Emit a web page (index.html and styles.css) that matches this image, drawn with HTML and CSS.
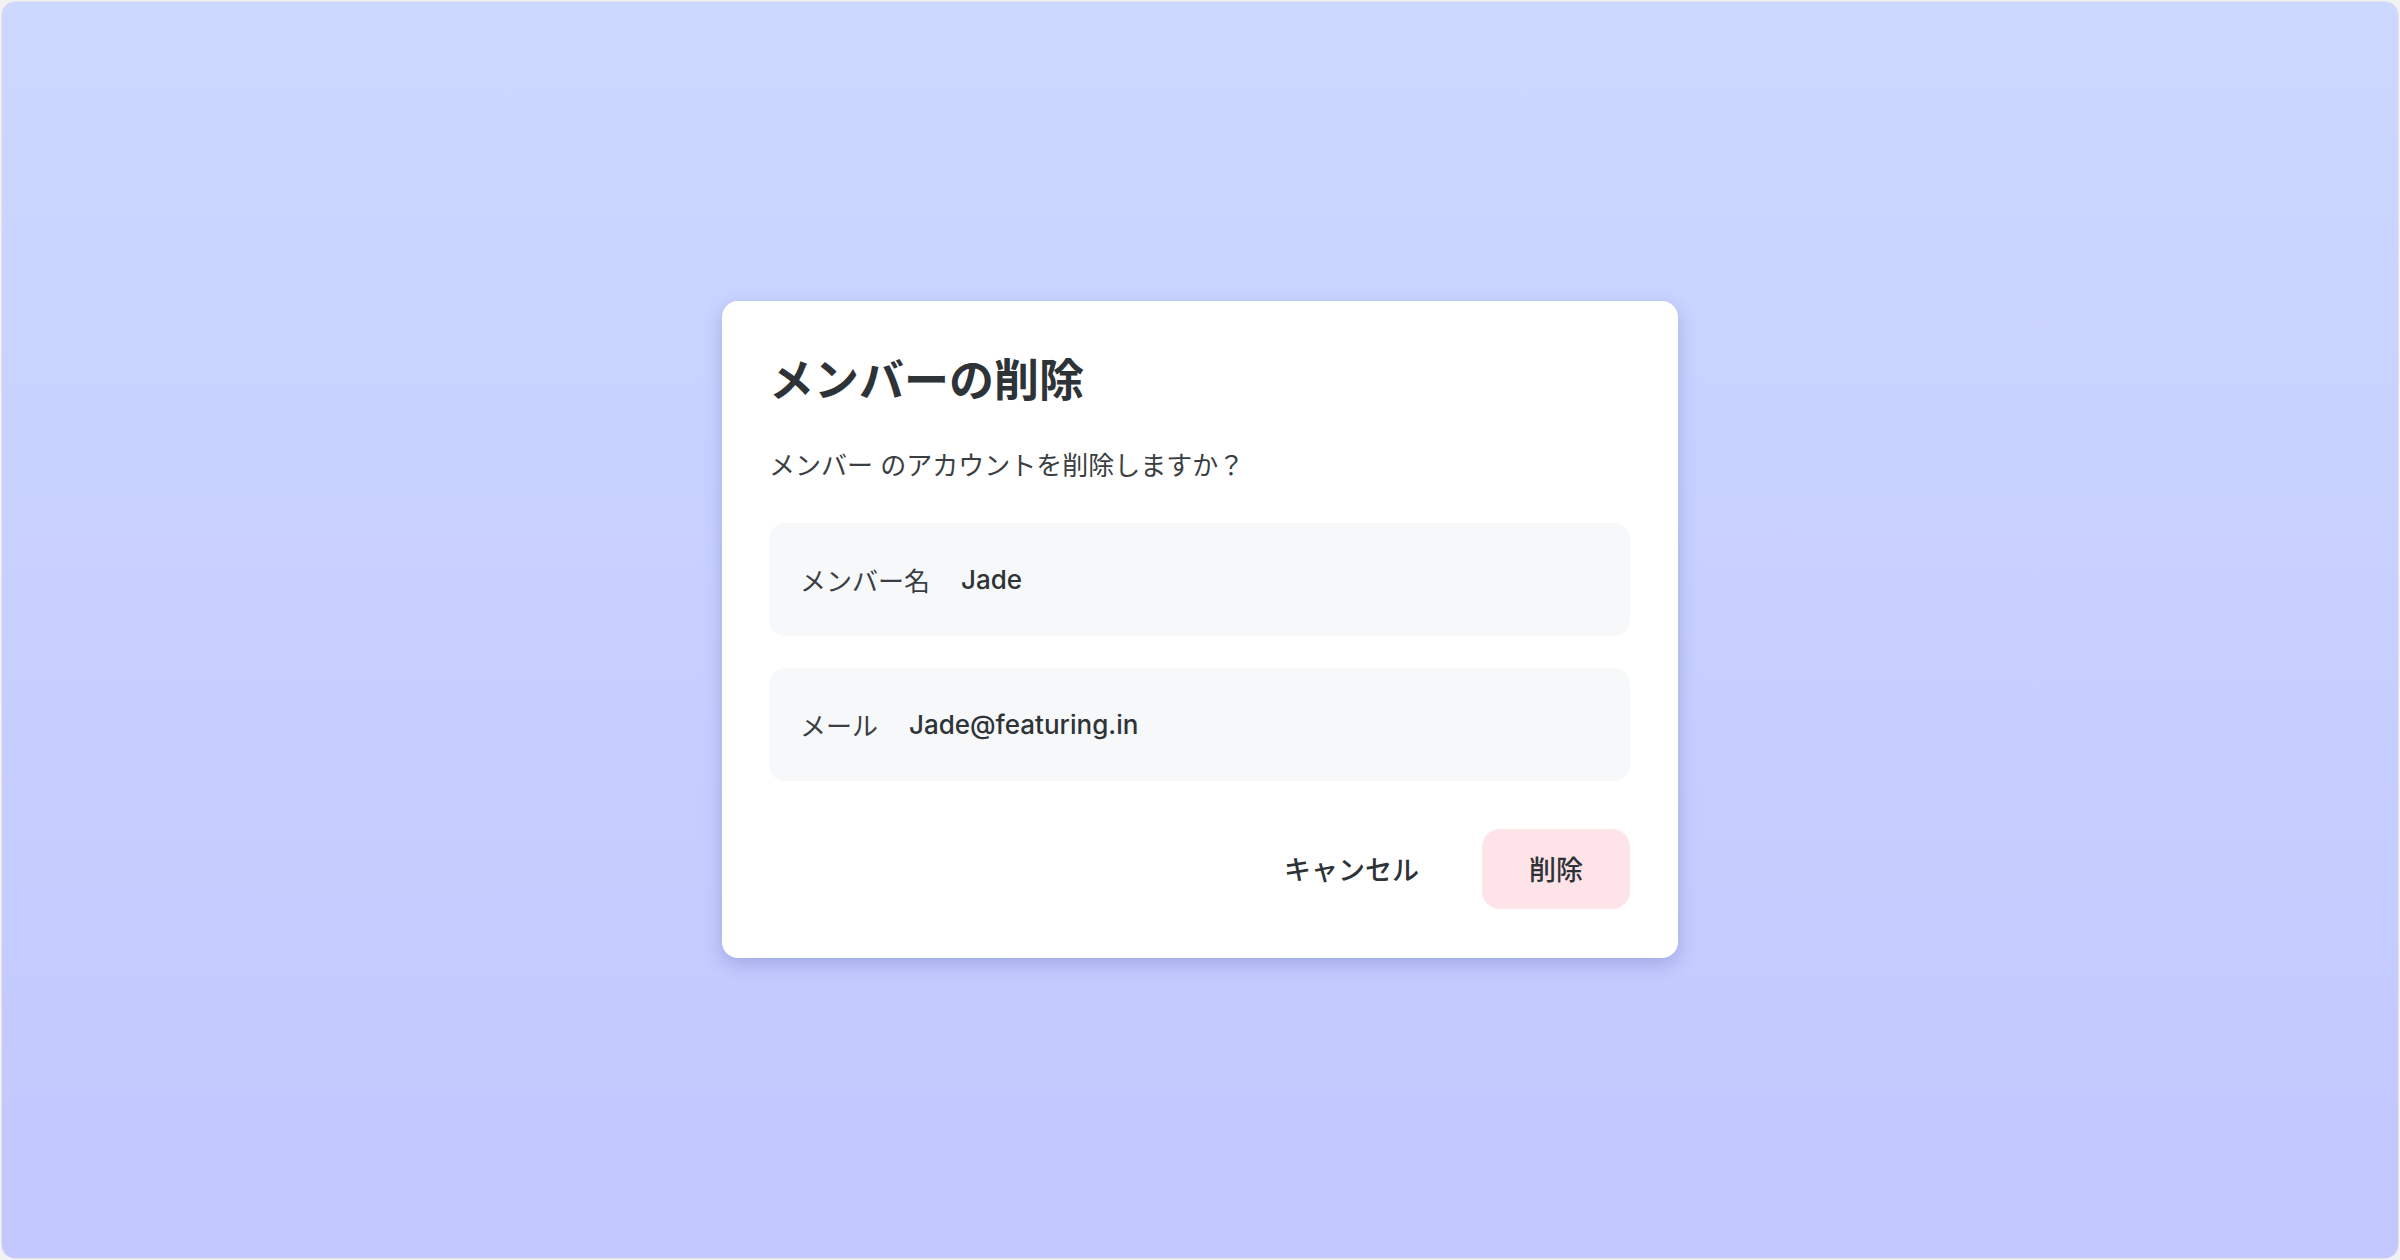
FILE: index.html
```html
<!DOCTYPE html>
<html lang="ja">
<head>
    <meta charset="UTF-8">
    <meta name="viewport" content="width=device-width, initial-scale=1.0">
    <title>メンバーの削除</title>
    <link rel="stylesheet" href="styles.css">
</head>
<body>

    <div class="frame">
        <div class="dialog">
            <h1 class="dialog-title">メンバーの削除</h1>
            <p class="dialog-text">メンバー のアカウントを削除しますか？</p>

            <div class="info-row">
                <span class="info-label">メンバー名</span>
                <span class="info-value">Jade</span>
            </div>
            <div class="info-row">
                <span class="info-label">メール</span>
                <span class="info-value">Jade@featuring.in</span>
            </div>

            <div class="actions">
                <button class="btn btn-cancel">キャンセル</button>
                <button class="btn btn-delete">削除</button>
            </div>
        </div>
    </div>

</body>
</html>
```

FILE: styles.css
```css
html, body {
    height: 100%;
}

body {
    font-family: Inter, "Noto Sans CJK JP", sans-serif;
    margin: 0;
    padding: 1px;
    box-sizing: border-box;
    background-color: #f3f3f5;
    color: #33373b;
}

.frame {
    height: 100%;
    box-sizing: border-box;
    border: 1px solid #e3e4ea;
    border-radius: 14px;
    background: linear-gradient(180deg, #ccd8ff 0%, #c2c7fe 100%);
    display: flex;
    align-items: center;
    justify-content: center;
}

.dialog {
    width: 956px;
    box-sizing: border-box;
    padding: 48px 48px 49px 47px;
    margin-bottom: 2px;
    background-color: #fff;
    border-radius: 16px;
    box-shadow: 0 6px 18px rgba(70, 80, 160, 0.28);
}

.dialog-title {
    font-size: 45px;
    line-height: 64px;
    font-weight: bold;
    color: #2e3337;
    margin: 0 0 33px;
}

.dialog-text {
    font-size: 26px;
    line-height: 40px;
    margin: 0 0 37px;
    color: #3a3e42;
}

.info-row {
    height: 113px;
    box-sizing: border-box;
    padding: 0 31px;
    background-color: #f7f8fa;
    border-radius: 16px;
    display: flex;
    align-items: center;
    gap: 31px;
    font-size: 26px;
}

.info-row + .info-row {
    margin-top: 32px;
}

.info-label {
    color: #3a3e42;
}

.info-value {
    color: #2e3337;
    font-weight: 500;
}

.actions {
    display: flex;
    justify-content: flex-end;
    gap: 16px;
    margin-top: 48px;
}

.btn {
    font-family: inherit;
    font-size: 27px;
    font-weight: 500;
    height: 80px;
    padding: 0 47px;
    border: none;
    border-radius: 18px;
    background: none;
    color: #2e3337;
}

.btn-delete {
    background-color: #fee4e8;
}
```
